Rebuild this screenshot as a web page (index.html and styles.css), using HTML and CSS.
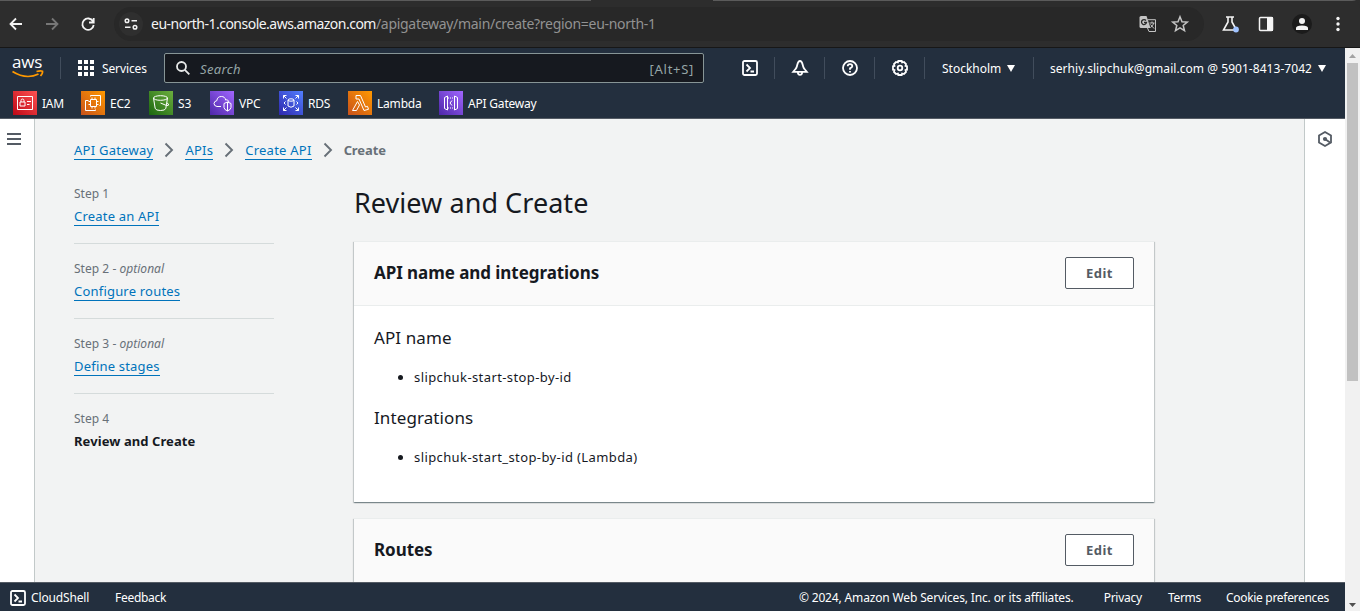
FILE: index.html
```
<!DOCTYPE html>
<html lang="en">
<head>
<meta charset="utf-8">
<title>API Gateway - Create</title>
<link rel="stylesheet" href="styles.css">
</head>
<body>
<div class="browser">
  <svg class="nav-ico back" viewBox="0 0 16 16"><path d="M14 8H3M8 2.500 2.500 8 8 13.500"/></svg>
  <svg class="nav-ico forward" viewBox="0 0 16 16"><path d="M2 8h11M8 2.500 13.500 8 8 13.500"/></svg>
  <svg class="nav-ico reload" viewBox="0 0 16 16"><path d="M13 5.300A5.700 5.700 0 1 0 13.700 9M13.700 2v4.500H9"/></svg>
  <div class="omnibox">
    <span class="site-info"><svg viewBox="0 0 14 12"><circle cx="3" cy="2.700" r="1.800"/><path d="M7.500 2.700H13M1 9.300h5.500"/><circle cx="11" cy="9.300" r="1.800"/></svg></span>
    <span class="url"><b>eu-north-1.console.aws.amazon.com</b>/apigateway/main/create?region=eu-north-1</span>
    <svg class="translate" viewBox="0 0 18 18"><path class="line" d="M8.500 4.700h8v11.800H10l-1.500-3.500"/><path class="fill" d="M2 1h5.500l4 12H2Q.5 13 .5 11.500v-9Q.5 1 2 1z"/><path class="line" d="M10.500 8h5M13 6.500V8M14.800 8q-.8 3-3.300 4.500M11.500 9.500l3.500 4"/><path class="cut" d="M7 5.500A2.500 2.500 0 1 0 7.500 7.500H5"/></svg>
    <svg class="star" viewBox="0 0 18 18"><path d="M9 1.800 11 6.700l5.300.4-4.100 3.400 1.300 5.200L9 12.900l-4.500 2.800 1.300-5.200L1.700 7.100 7 6.700z"/></svg>
  </div>
  <svg class="flask" viewBox="0 0 18 18"><path d="M4 2h8M6 2v5L1.500 15h13L10 7V2"/><circle cx="14" cy="14.500" r="2.900"/></svg>
  <svg class="panel-ico" viewBox="0 0 16 16"><rect x="1.500" y="1.500" width="13" height="13" rx="1"/><path d="M9 1h6v14H9z"/></svg>
  <span class="profile"><svg viewBox="0 0 14 14"><circle cx="7" cy="4" r="3"/><path d="M1 13v-2q0-2.500 6-2.500t6 2.500v2z"/></svg></span>
  <svg class="dots" viewBox="0 0 4 16"><circle cx="2" cy="2.500" r="1.700"/><circle cx="2" cy="8" r="1.700"/><circle cx="2" cy="13.500" r="1.700"/></svg>
</div>
<div class="viewport">
<div class="app">
  <header class="header">
    <div class="topbar">
      <div class="logo"><span>aws</span><svg viewBox="0 0 32 9"><path class="smile" d="M.5 1.500Q14 10 26.500 4"/><path class="tip" d="M24.500 1.500Q28.500 .5 30.500 1.200 31 3 28.500 6"/></svg></div>
      <button class="services"><svg viewBox="0 0 16 16"><path d="M0 0h4v4H0zM6 0h4v4H6zM12 0h4v4h-4zM0 6h4v4H0zM6 6h4v4H6zM12 6h4v4h-4zM0 12h4v4H0zM6 12h4v4H6zM12 12h4v4h-4z"/></svg><span>Services</span></button>
      <div class="search"><svg viewBox="0 0 14 14"><circle cx="5.500" cy="5.500" r="4.500"/><path d="m8.800 8.800 4.500 4.500"/></svg><i>Search</i><span>[Alt+S]</span></div>
      <nav class="tools">
        <span class="tool"><svg viewBox="0 0 16 16"><rect x="1" y="1" width="14" height="14" rx="1.500"/><path d="m4.500 4.500 3.500 3.500-3.500 3.500M8.500 11.500H12"/></svg></span>
        <span class="tool"><svg viewBox="0 0 16 16"><path d="M8 1C5.800 1 5.600 3.500 5 6q-.5 2-1.500 3L1.200 11.800h13.600L12.500 9Q11.500 8 11 6C10.400 3.500 10.200 1 8 1zM5.800 12a2.200 2.800 0 0 0 4.400 0"/></svg></span>
        <span class="tool"><svg viewBox="0 0 16 16"><circle cx="8" cy="8" r="7"/><path d="M5.700 6.200Q5.700 4.200 8 4.200t2.300 2Q10.300 7.300 8 8.300V9.800M8 10.900v1.500"/></svg></span>
        <span class="tool"><svg viewBox="0 0 16 16"><path d="m6.300 1-.4 1.500L4 2 2 4l.5 1.900L1 6.300v3.400l1.500.4L2 12l2 2 1.900-.5.4 1.500h3.400l.4-1.500L12 14l2-2-.5-1.900 1.500-.4V6.300l-1.500-.4L14 4l-2-2-1.900.5L9.700 1z"/><circle cx="8" cy="8" r="2.300"/></svg></span>
      </nav>
      <div class="region"><span>Stockholm</span><svg class="caret" viewBox="0 0 8 7"><path d="M0 0h8L4 7z"/></svg></div>
      <div class="account"><span>serhiy.slipchuk@gmail.com @ 5901-8413-7042</span><svg class="caret" viewBox="0 0 8 7"><path d="M0 0h8L4 7z"/></svg></div>
    </div>
    <nav class="favorites">
      <a class="fav iam"><svg viewBox="0 0 24 24"><path d="M4.500 5.500h15v13h-15zM7 11h5v4H7zM8 11V9.500q0-1.500 1.500-1.500T11 9.500V11M14 10.500h4M14 13.500h2.500"/></svg><span>IAM</span></a>
      <a class="fav ec2"><svg viewBox="0 0 24 24"><path d="M9.500 8.500h6v7h-6zM11 8.500v-2M14 8.500v-2M11 15.500v2M14 15.500v2M9.500 10.500h-2M9.500 13.500h-2M15.500 10.500h2M15.500 13.500h2M9.500 5.500v-1h10v10h-1M7.500 9.500h-3v10h10v-1"/></svg><span>EC2</span></a>
      <a class="fav s3"><svg viewBox="0 0 24 24"><ellipse cx="11.500" cy="7" rx="7" ry="2.300"/><path d="m4.500 7 1.700 10.500Q7 19.500 11.500 19.500t5.300-2L18.500 7M11.500 12l6 2.500q2.500.5 2-1.500l-1.500-1"/></svg><span>S3</span></a>
      <a class="fav vpc"><svg viewBox="0 0 24 24"><path d="M11 15.500H7q-3-.5-3-3 .3-2.500 2.800-2.800.5-4.200 4.500-4.200 3.500-.2 4.500 3.700 1-1 2 0 1 .8 1 2M14 12.500l3.500-1.500 3.500 1.500v4q0 2-3.500 3.500-3.500-1.500-3.500-3.500zM17.500 11v9"/></svg><span>VPC</span></a>
      <a class="fav rds"><svg viewBox="0 0 24 24"><ellipse cx="12" cy="9" rx="3" ry="1.200"/><path d="M9 9v6q3 2.500 6 0V9M7.500 4.500h-3v3M4.500 4.500l3 3M16.500 4.500h3v3M19.500 4.500l-3 3M7.500 19.500h-3v-3M4.500 19.500l3-3M16.500 19.500h3v-3M19.500 19.500l-3-3M6.500 10.500 5 12l1.500 1.500M17.500 10.500 19 12l-1.500 1.500"/></svg><span>RDS</span></a>
      <a class="fav lambda"><svg viewBox="0 0 24 24"><path d="M8 4.500h4.500l5 11.500 2-.7 1 3-4.500 1.200L11 8H8zM9.500 10.500l-5 9H8.500l3-5.500z"/></svg><span>Lambda</span></a>
      <a class="fav apigw"><svg viewBox="0 0 24 24"><path d="M8.500 5v14l-3-1.500v-11zM15.500 5v14l3-1.500v-11zM13 9.500 11 12l2 2.500"/><path class="dash" d="M9 7h6.500M9 17h6.500"/></svg><span>API Gateway</span></a>
    </nav>
  </header>
  <div class="body">
    <aside class="left-rail"><svg viewBox="0 0 14 12"><path d="M0 1h14M0 6h14M0 11h14"/></svg></aside>
    <div class="content">
      <nav class="crumbs">
        <a class="link">API Gateway</a><svg viewBox="0 0 10 16"><path d="m1.500 1.500 6.500 6.500-6.500 6.500"/></svg>
        <a class="link">APIs</a><svg viewBox="0 0 10 16"><path d="m1.500 1.500 6.500 6.500-6.500 6.500"/></svg>
        <a class="link">Create API</a><svg viewBox="0 0 10 16"><path d="m1.500 1.500 6.500 6.500-6.500 6.500"/></svg>
        <b>Create</b>
      </nav>
      <div class="columns">
        <ol class="steps">
          <li><small>Step 1</small><a class="link">Create an API</a></li>
          <li><small>Step 2 - <i>optional</i></small><a class="link">Configure routes</a></li>
          <li><small>Step 3 - <i>optional</i></small><a class="link">Define stages</a></li>
          <li><small>Step 4</small><b>Review and Create</b></li>
        </ol>
        <main class="main">
          <h1>Review and Create</h1>
          <section class="card">
            <div class="card-head"><h2>API name and integrations</h2><button class="edit">Edit</button></div>
            <div class="card-body">
              <h3>API name</h3>
              <ul><li>slipchuk-start-stop-by-id</li></ul>
              <h3>Integrations</h3>
              <ul><li>slipchuk-start_stop-by-id (Lambda)</li></ul>
            </div>
          </section>
          <section class="card">
            <div class="card-head"><h2>Routes</h2><button class="edit">Edit</button></div>
            <div class="card-body"></div>
          </section>
        </main>
      </div>
    </div>
    <aside class="right-rail"><svg viewBox="0 0 16 16"><path d="m8 1 6 3.500v7L8 15l-6-3.500v-7z"/><circle cx="8" cy="8" r="1.200"/><path d="m8 8 5 3.500"/></svg></aside>
  </div>
  <footer class="footer">
    <span class="cloudshell"><svg viewBox="0 0 16 16"><rect x="1" y="1" width="14" height="14" rx="1.500"/><path d="m4.500 4.500 3.500 3.500-3.500 3.500M8.500 11.500H12"/></svg><span>CloudShell</span></span>
    <span class="feedback">Feedback</span>
    <span class="copyright">© 2024, Amazon Web Services, Inc. or its affiliates.</span>
    <span class="privacy">Privacy</span>
    <span class="terms">Terms</span>
    <span class="cookies">Cookie preferences</span>
  </footer>
</div>
<div class="scrollbar"><svg viewBox="0 0 7 4"><path class="up" d="M0 4h7L3.500 0z"/></svg><span class="thumb"></span><svg viewBox="0 0 7 4"><path class="down" d="M0 0h7L3.500 4z"/></svg></div>
</div>
</body>
</html>
```
FILE: styles.css
```
* { box-sizing: border-box; }
body { margin: 0; width: 1360px; height: 611px; overflow: hidden; display: flex; flex-direction: column; font: 13px/20px "Noto Sans", sans-serif; color: #16191f; background: #2d2d2d; }
svg { display: block; flex: none; fill: none; stroke: currentColor; overflow: visible; }
button { font: inherit; margin: 0; padding: 0; background: none; border: 0; color: inherit; }
span, a, b, h1, h2, h3 { white-space: nowrap; }

.browser { height: 48px; flex: none; display: flex; align-items: center; padding-top: 1px; background: linear-gradient(90deg, #5b5b5b 591px, #2d2d2d 591px 713px, #5b5b5b 713px) 0 0 / 100% 1px no-repeat #2d2d2d; border-bottom: 1px solid #171717; border-radius: 0 8px 0 0; color: #f4f4f4; }
.nav-ico { width: 16px; height: 16px; stroke-width: 1.8; }
.back { margin-left: 8px; }
.forward { margin-left: 20px; color: #777; }
.reload { margin-left: 20px; }
.omnibox { width: 1090px; height: 34px; margin-left: 18px; border-radius: 17px; background: #282828; display: flex; align-items: center; }
.site-info { width: 24px; height: 24px; margin-left: 5px; border-radius: 50%; background: #2f2f2f; display: grid; place-items: center; }
.site-info svg { width: 14px; height: 12px; stroke-width: 1.5; }
.url { width: 505px; margin-left: 8px; font-size: 14px; letter-spacing: -.295px; color: #929292; }
.url b { font-weight: 400; letter-spacing: -.52px; color: #f4f4f4; }
.translate { width: 18px; height: 18px; margin-left: auto; color: #c4c4c4; }
.translate .fill { fill: #c4c4c4; stroke: none; }
.translate .cut { stroke: #282828; stroke-width: 1.3; }
.star { width: 18px; height: 18px; margin: 0 15px 0 14px; color: #c4c4c4; stroke-width: 1.5; }
.flask { width: 18px; height: 18px; margin-left: 18px; stroke-width: 1.6; }
.flask circle { fill: #a0c3ff; stroke: none; }
.panel-ico { width: 16px; height: 16px; margin-left: 18px; stroke-width: 1.5; }
.panel-ico path { fill: currentColor; stroke: none; }
.profile { width: 20px; height: 20px; margin-left: 18px; border-radius: 50%; background: #1b1b1b; display: grid; place-items: center; }
.profile svg { width: 14px; height: 14px; fill: currentColor; stroke: none; }
.dots { width: 4px; height: 16px; margin-left: 24px; fill: currentColor; stroke: none; }

.viewport { flex: 1; min-height: 0; display: flex; }
.app { width: 1345px; display: flex; flex-direction: column; }
.header { height: 71px; flex: none; background: #232f3e; color: #fff; border-bottom: 1px solid #545b64; font-size: 12px; }
.topbar { height: 40px; display: flex; align-items: center; }
.logo { width: 49px; height: 22px; margin-left: 12px; border-right: 1px solid #414d5c; }
.logo span { display: block; height: 13px; font: 500 17px/10px "Open Sans", sans-serif; letter-spacing: -.2px; }
.logo svg { width: 32px; height: 9px; color: #f90; stroke-width: 1.7; }
.services { display: flex; align-items: center; gap: 8px; width: 86px; margin-left: 17px; }
.services svg { width: 16px; height: 16px; fill: #fff; stroke: none; }
.services span { letter-spacing: -.12px; }
.services span, .region span, .account span, .fav span { padding-top: 1px; }
.search { width: 540px; height: 30px; border: 1px solid #879596; border-radius: 2px; background: #16191f; color: #95a5a6; display: flex; align-items: center; padding: 1px 9px 0 11px; font-size: 13px; }
.search svg { width: 14px; height: 14px; margin: -1px 10px 0 0; color: #e8eaea; stroke-width: 1.8; }
.search i { letter-spacing: .35px; }
.search span { margin-left: auto; letter-spacing: .7px; }
.tools { display: flex; align-items: center; margin-left: 21px; }
.tool { width: 50px; height: 22px; border-right: 1px solid #414d5c; display: grid; place-items: center; }
.tool svg { width: 16px; height: 16px; stroke-width: 1.8; }
.region { width: 109px; height: 22px; border-right: 1px solid #414d5c; display: flex; align-items: center; padding-left: 17px; gap: 6px; }
.account { display: flex; align-items: center; margin-left: 16px; gap: 6px; letter-spacing: .045px; }
.caret { width: 8px; height: 7px; fill: #fff; stroke: none; }
.favorites { height: 30px; display: grid; grid-template-columns: 68px 68px 61px 69px 69px 91px 110px; align-items: center; padding-left: 13px; letter-spacing: -.2px; }
.fav { display: flex; align-items: center; gap: 5px; }
.fav svg { width: 24px; height: 24px; stroke-width: 1; }
.fav .dash { stroke-dasharray: 1 1; }
.iam svg { background: linear-gradient(45deg, #bd0816, #ff5252); }
.ec2 svg, .lambda svg { background: linear-gradient(45deg, #c8511b, #f90); }
.s3 svg { background: linear-gradient(45deg, #1b660f, #6cae3e); }
.vpc svg, .apigw svg { background: linear-gradient(45deg, #4d27a8, #a166ff); }
.rds svg { background: linear-gradient(45deg, #2e27ad, #527fff); }

.body { flex: 1; min-height: 0; display: flex; overflow: hidden; background: #f2f3f3; }
.left-rail { width: 35px; background: #fff; border-right: 1px solid #c2c9c9; padding: 14px 0 0 7px; color: #545b64; flex: none; }
.left-rail svg { width: 14px; height: 12px; stroke-width: 2; }
.right-rail { width: 41px; background: #fff; border-left: 1px solid #c2c9c9; padding: 12px 0 0 12px; color: #545b64; flex: none; }
.right-rail svg { width: 16px; height: 16px; stroke-width: 1.8; }
.right-rail circle { fill: currentColor; }
.content { flex: 1; padding: 21px 0 0 39px; }
.crumbs { display: flex; height: 20px; align-items: center; color: #687078; }
.crumbs svg { width: 10px; height: 16px; margin: 0 11px; stroke-width: 1.9; }
.crumbs b { letter-spacing: -.1px; }
.link { color: #0073bb; border-bottom: 1px solid #0073bb; line-height: 18px; letter-spacing: .2px; }
.crumbs .link { letter-spacing: .25px; }
.columns { display: flex; gap: 80px; margin-top: 23px; }
.steps { list-style: none; width: 200px; margin: 0; padding: 0; }
.steps li { height: 75px; display: flex; flex-direction: column; align-items: flex-start; }
.steps li + li::before { content: ""; width: 200px; height: 1px; margin-top: -15px; margin-bottom: 14px; background: #d5dbdb; }
.steps small { font-size: 12px; line-height: 21px; margin-bottom: 3px; letter-spacing: .03px; color: #687078; }
.steps b { margin-top: -1px; letter-spacing: .08px; }
.main { width: 800px; padding-top: 2px; }
h1 { margin: 0 0 20px; font-size: 27px; line-height: 36px; font-weight: 400; letter-spacing: .05px; }
.card { margin-bottom: 16px; background: #fff; border-top: 1px solid #eaeded; box-shadow: 0 1px 1px rgba(0,28,36,.3), 1px 1px 1px rgba(0,28,36,.15), -1px 1px 1px rgba(0,28,36,.15); }
.card-head { height: 64px; display: flex; align-items: center; justify-content: space-between; padding: 0 20px 2px; background: #fafafa; border-bottom: 1px solid #eaeded; }
h2 { margin: 0; font-size: 17px; line-height: 22px; font-weight: 700; letter-spacing: -.06px; }
.edit { width: 69px; height: 32px; border: 1px solid #545b64; border-radius: 2px; background: #fff; color: #545b64; font-weight: 700; letter-spacing: .5px; }
.card-body { height: 196px; padding: 21px 20px; }
h3 { margin: 0; font-size: 17px; line-height: 22px; font-weight: 400; letter-spacing: .1px; }
ul { margin: 18px 0 20px; padding-left: 40px; }
ul li { line-height: 20px; letter-spacing: .4px; }

.footer { height: 29px; flex: none; background: #232f3e; border-top: 1px solid #545b64; color: #fff; display: flex; align-items: center; font-size: 12px; padding: 2px 16px 0 10px; letter-spacing: -.15px; }
.cloudshell { display: flex; align-items: center; gap: 5px; width: 105px; }
.cloudshell svg { width: 16px; height: 16px; stroke-width: 1.8; margin-top: -1px; }
.feedback { letter-spacing: -.28px; }
.copyright { margin-left: auto; }
.privacy { margin-left: 30px; letter-spacing: -.25px; }
.terms { margin-left: 26px; letter-spacing: -.3px; }
.cookies { margin-left: 25px; letter-spacing: -.3px; }
.scrollbar { width: 15px; background: #f1f1f1; display: flex; flex-direction: column; align-items: center; padding: 6px 0 4px; }
.scrollbar svg { width: 7px; height: 4px; stroke: none; }
.scrollbar svg:last-child { margin-top: auto; }
.up { fill: #a3a3a3; }
.down { fill: #505050; }
.thumb { width: 11px; height: 318px; margin-top: 5px; background: #c1c1c1; }
```
